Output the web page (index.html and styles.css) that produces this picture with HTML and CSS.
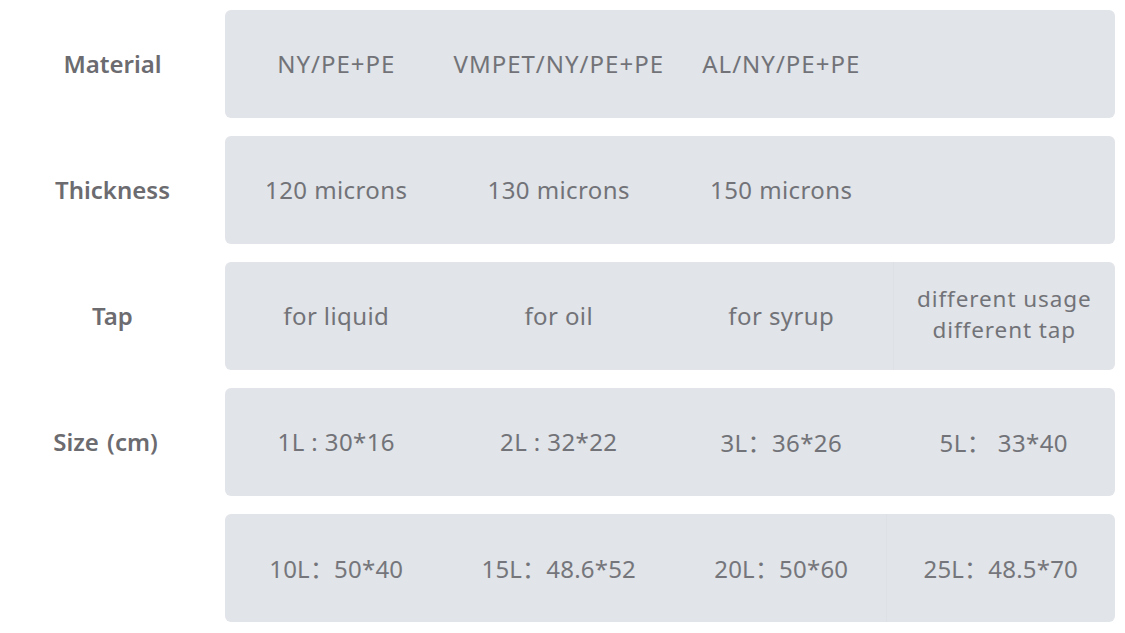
FILE: index.html
```html
<!DOCTYPE html>
<html>
<head>
<meta charset="utf-8">
<link rel="stylesheet" href="styles.css">
</head>
<body>
<div class="table">
  <div class="row">
    <div class="label">Material</div>
    <div class="box wide">
      <div class="cell">NY/PE+PE</div>
      <div class="cell">VMPET/NY/PE+PE</div>
      <div class="cell">AL/NY/PE+PE</div>
      <div class="cell"></div>
    </div>
  </div>
  <div class="row">
    <div class="label">Thickness</div>
    <div class="box">
      <div class="cell">120 microns</div>
      <div class="cell">130 microns</div>
      <div class="cell">150 microns</div>
      <div class="cell"></div>
    </div>
  </div>
  <div class="row">
    <div class="label">Tap</div>
    <div class="box">
      <div class="cell">for liquid</div>
      <div class="cell">for oil</div>
      <div class="cell">for syrup</div>
      <div class="cell two divided"><span>different usage</span><span>different tap</span></div>
    </div>
  </div>
  <div class="row">
    <div class="label label-size">Size (cm)</div>
    <div class="box">
      <div class="cell">1L : 30*16</div>
      <div class="cell">2L : 32*22</div>
      <div class="cell">3L：36*26</div>
      <div class="cell">5L：&nbsp;33*40</div>
    </div>
  </div>
  <div class="row">
    <div class="label"></div>
    <div class="box narrow">
      <div class="cell">10L：50*40</div>
      <div class="cell">15L：48.6*52</div>
      <div class="cell">20L：50*60</div>
      <div class="cell divided2">25L：48.5*70</div>
    </div>
  </div>
</div>
</body>
</html>
```

FILE: styles.css
```css
html, body {
  margin: 0;
  padding: 0;
  background: #ffffff;
}
body {
  width: 1125px;
  height: 633px;
  overflow: hidden;
  font-family: "Noto Sans", "Noto Sans CJK SC", sans-serif;
}
.table {
  display: flex;
  flex-direction: column;
  gap: 18px;
  padding-top: 10px;
}
.row {
  display: flex;
  align-items: stretch;
  height: 108px;
}
.label {
  width: 225px;
  box-sizing: border-box;
  display: flex;
  align-items: center;
  justify-content: center;
  font-size: 24px;
  font-weight: 600;
  color: #6b6b70;
  padding-bottom: 2px;
  word-spacing: 2px;
}
.label-size {
  padding-right: 14px;
}
.box {
  width: 890px;
  background: #e1e4e8;
  border-radius: 6px;
  display: grid;
  grid-template-columns: repeat(4, 1fr);
}
.cell {
  display: flex;
  align-items: center;
  justify-content: center;
  text-align: center;
  font-size: 24px;
  color: #727378;
  letter-spacing: 0.4px;
  padding-bottom: 2px;
  white-space: nowrap;
}
.wide .cell {
  letter-spacing: 1px;
}
.cell.two {
  flex-direction: column;
  font-size: 22.5px;
  letter-spacing: 0.9px;
  line-height: 31px;
  padding-bottom: 4px;
}
.cell.two span {
  display: block;
  height: 31px;
}
.cell.divided {
  border-left: 1px solid #dde0e4;
}
.cell.divided2 {
  border-left: 1px solid #dde0e4;
  margin-left: -7px;
}
.narrow .cell {
  font-size: 24px;
  letter-spacing: 0.2px;
  color: #75767b;
}
```
